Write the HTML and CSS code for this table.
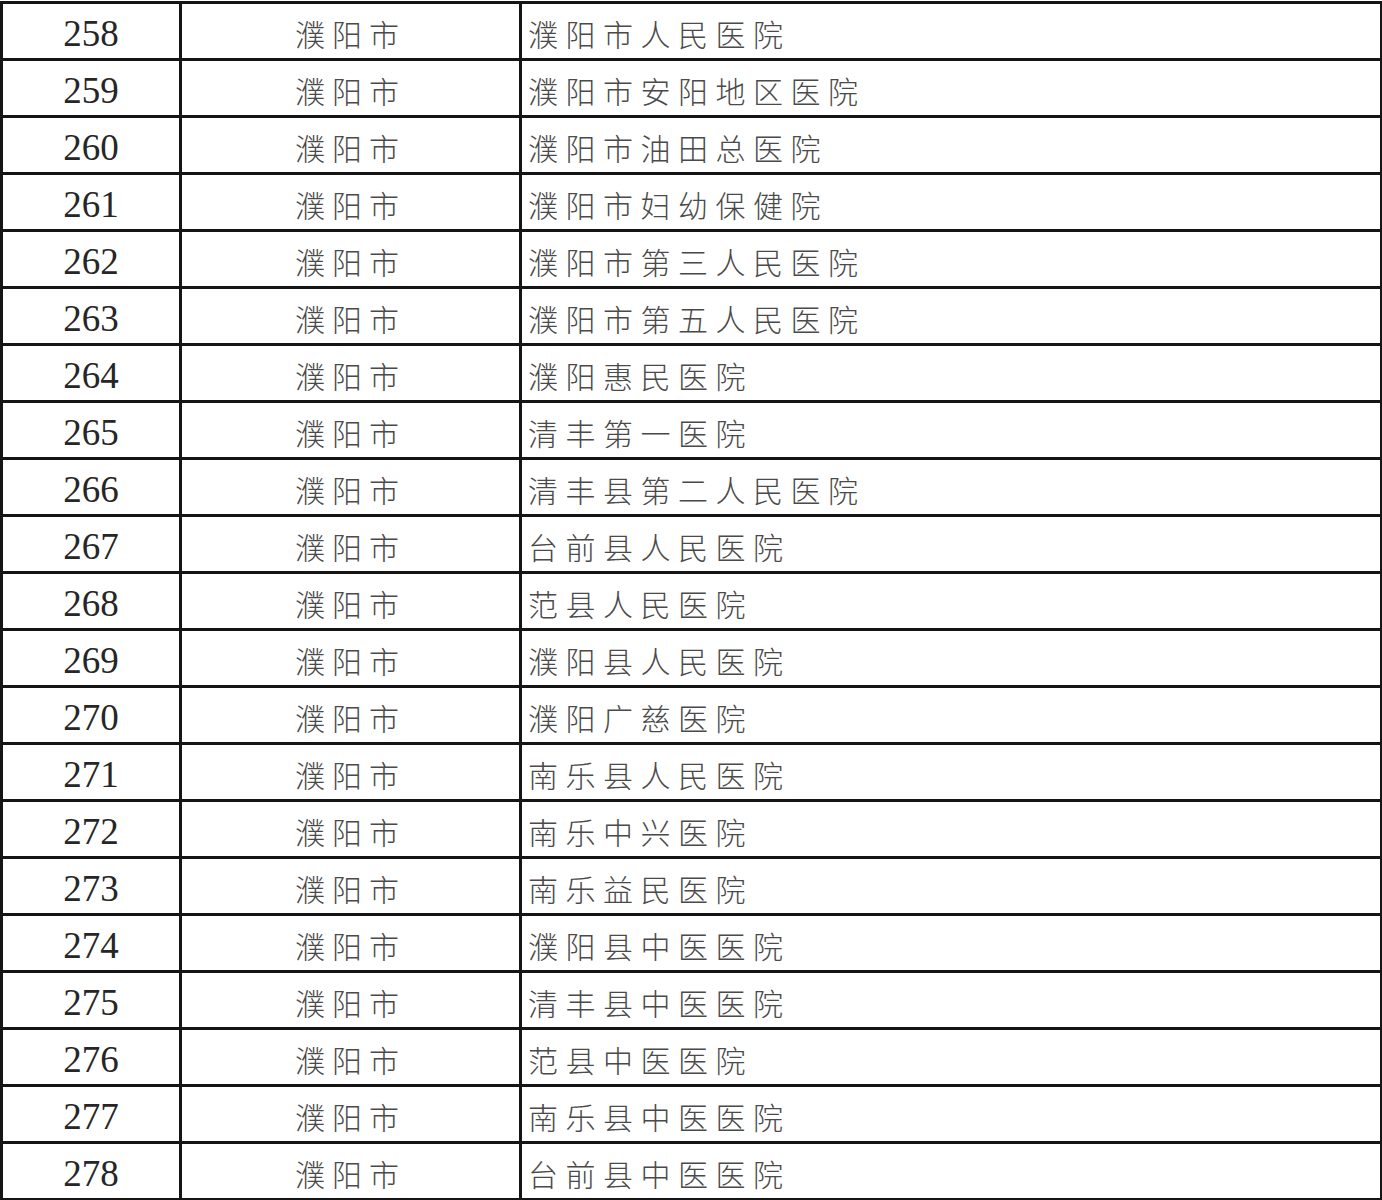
FILE: index.html
```html
<!DOCTYPE html>
<html lang="zh-CN">
<head>
<meta charset="utf-8">
<title>濮阳市医院名单</title>
<link rel="stylesheet" href="styles.css">
</head>
<body>
<table class="list">
  <colgroup>
    <col class="c-no">
    <col class="c-city">
    <col class="c-name">
  </colgroup>
  <tbody>
    <tr><td class="no">258</td><td class="city">濮阳市</td><td class="name">濮阳市人民医院</td></tr>
    <tr><td class="no">259</td><td class="city">濮阳市</td><td class="name">濮阳市安阳地区医院</td></tr>
    <tr><td class="no">260</td><td class="city">濮阳市</td><td class="name">濮阳市油田总医院</td></tr>
    <tr><td class="no">261</td><td class="city">濮阳市</td><td class="name">濮阳市妇幼保健院</td></tr>
    <tr><td class="no">262</td><td class="city">濮阳市</td><td class="name">濮阳市第三人民医院</td></tr>
    <tr><td class="no">263</td><td class="city">濮阳市</td><td class="name">濮阳市第五人民医院</td></tr>
    <tr><td class="no">264</td><td class="city">濮阳市</td><td class="name">濮阳惠民医院</td></tr>
    <tr><td class="no">265</td><td class="city">濮阳市</td><td class="name">清丰第一医院</td></tr>
    <tr><td class="no">266</td><td class="city">濮阳市</td><td class="name">清丰县第二人民医院</td></tr>
    <tr><td class="no">267</td><td class="city">濮阳市</td><td class="name">台前县人民医院</td></tr>
    <tr><td class="no">268</td><td class="city">濮阳市</td><td class="name">范县人民医院</td></tr>
    <tr><td class="no">269</td><td class="city">濮阳市</td><td class="name">濮阳县人民医院</td></tr>
    <tr><td class="no">270</td><td class="city">濮阳市</td><td class="name">濮阳广慈医院</td></tr>
    <tr><td class="no">271</td><td class="city">濮阳市</td><td class="name">南乐县人民医院</td></tr>
    <tr><td class="no">272</td><td class="city">濮阳市</td><td class="name">南乐中兴医院</td></tr>
    <tr><td class="no">273</td><td class="city">濮阳市</td><td class="name">南乐益民医院</td></tr>
    <tr><td class="no">274</td><td class="city">濮阳市</td><td class="name">濮阳县中医医院</td></tr>
    <tr><td class="no">275</td><td class="city">濮阳市</td><td class="name">清丰县中医医院</td></tr>
    <tr><td class="no">276</td><td class="city">濮阳市</td><td class="name">范县中医医院</td></tr>
    <tr><td class="no">277</td><td class="city">濮阳市</td><td class="name">南乐县中医医院</td></tr>
    <tr><td class="no">278</td><td class="city">濮阳市</td><td class="name">台前县中医医院</td></tr>
  </tbody>
</table>
</body>
</html>
```

FILE: styles.css
```css
html, body {
  margin: 0;
  padding: 0;
  background: #ffffff;
}

body {
  overflow: hidden;
  height: 1200px;
}

.list {
  border-collapse: collapse;
  table-layout: fixed;
  width: 1380px;
  margin-top: 1px;
}

.c-no { width: 179px; }
.c-city { width: 340px; }
.c-name { width: 861px; }

.list tr {
  height: 57px;
}

.list td {
  border: 3px solid #151515;
  padding: 4px 0 0 0;
  vertical-align: middle;
  white-space: nowrap;
  overflow: hidden;
}

.no {
  text-align: center;
  font-family: "Liberation Serif", "Times New Roman", serif;
  font-size: 37px;
  color: #262626;
  padding-right: 2px;
}

.city {
  text-align: center;
  font-family: "Noto Sans CJK SC", sans-serif;
  font-size: 30px;
  letter-spacing: 7px;
  color: #4a4a4a;
  font-weight: 300;
}

.name {
  text-align: left;
  font-family: "Noto Sans CJK SC", sans-serif;
  font-size: 30px;
  letter-spacing: 7.5px;
  color: #4a4a4a;
  font-weight: 300;
}

.list td.name {
  padding-left: 6px;
}
```
